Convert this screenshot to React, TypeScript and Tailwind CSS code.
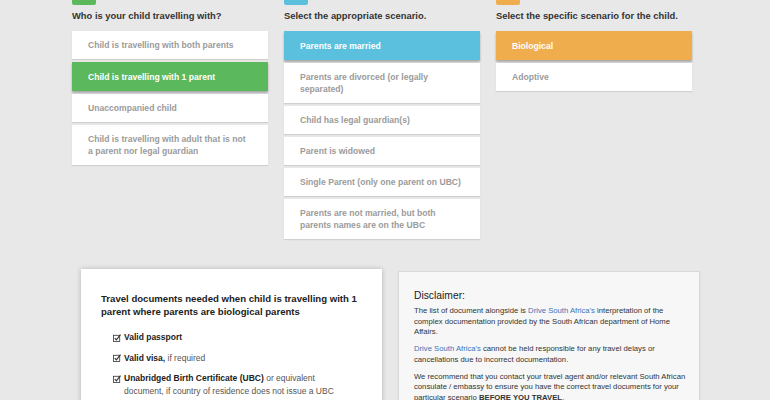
import clsx from "clsx";

type Step = {
  label: string;
  badge: string;
  active: string;
  title: string;
  options: string[];
  selected: number;
};

const STEPS: Step[] = [
  {
    label: "Step 1",
    badge: "bg-[#5cb85c]",
    active: "bg-[#5cb85c]",
    title: "Who is your child travelling with?",
    options: [
      "Child is travelling with both parents",
      "Child is travelling with 1 parent",
      "Unaccompanied child",
      "Child is travelling with adult that is not a parent nor legal guardian",
    ],
    selected: 1,
  },
  {
    label: "Step 2",
    badge: "bg-[#5bc0de]",
    active: "bg-[#5bc0de]",
    title: "Select the appropriate scenario.",
    options: [
      "Parents are married",
      "Parents are divorced (or legally separated)",
      "Child has legal guardian(s)",
      "Parent is widowed",
      "Single Parent (only one parent on UBC)",
      "Parents are not married, but both parents names are on the UBC",
    ],
    selected: 0,
  },
  {
    label: "Step 3",
    badge: "bg-[#f0ad4e]",
    active: "bg-[#f0ad4e]",
    title: "Select the specific scenario for the child.",
    options: ["Biological", "Adoptive"],
    selected: 0,
  },
];

/** 체크 표시 — 상자 + 체크 */
function CheckBox() {
  return (
    <svg viewBox="0 0 10 10" className="mt-[2.5px] h-[8px] w-[8px] shrink-0">
      <rect x="0.6" y="1.6" width="7.8" height="7.8" fill="none" stroke="#333" strokeWidth="1" />
      <path d="M2.2 5.2 L4.2 7.4 L9.4 0.8" fill="none" stroke="#333" strokeWidth="1.4" />
    </svg>
  );
}

function StepColumn({ step }: { step: Step }) {
  return (
    <div className="w-[196px]">
      {/* 단계 라벨 — 화면 위쪽에 잘려 색 띠만 보임 */}
      <div
        aria-label={step.label}
        className={clsx("-mt-[9px] h-[14px] w-[24px] rounded-[2px]", step.badge)}
      />
      <h3 className="mt-[5px] mb-[9px] text-[9.4px] font-bold leading-[12px] text-[#333]">
        {step.title}
      </h3>
      <div className="flex flex-col gap-[3px]">
        {step.options.map((opt, i) => (
          <div
            key={opt}
            className={clsx(
              "px-[16px] text-[8.6px] font-bold leading-[12px]",
              i === step.selected
                ? clsx(step.active, "py-[8.5px] text-white shadow-[0_2px_2px_rgba(0,0,0,0.28)]")
                : "bg-white py-[8px] text-[#9b9b9b] shadow-[0_1px_1px_rgba(0,0,0,0.1)]",
            )}
          >
            {opt}
          </div>
        ))}
      </div>
    </div>
  );
}

export default function App() {
  return (
    <div className="h-[400px] w-full overflow-hidden bg-[#e8e8e8] font-['Liberation_Sans',Arial,sans-serif]">
      <div className="flex items-start gap-[16px] pl-[72px]">
        {STEPS.map((s) => (
          <StepColumn key={s.label} step={s} />
        ))}
      </div>

      <div className="mt-[30px] flex items-start gap-[16px] pl-[81px]">
        <section className="w-[301px] bg-white px-[20px] pt-[23px] pb-[20px] shadow-[0_0_5px_rgba(0,0,0,0.22)]">
          <h2 className="text-[9.6px] font-bold leading-[13px] text-[#222]">
            Travel documents needed when child is travelling with 1 parent where parents are
            biological parents
          </h2>
          <ul className="mt-[13px] flex flex-col gap-[7.5px] pl-[12px] text-[8.5px] leading-[13px] text-[#222]">
            <li className="flex gap-[3px]">
              <CheckBox />
              <div className="w-[225px] font-bold">Valid passport</div>
            </li>
            <li className="flex gap-[3px]">
              <CheckBox />
              <div className="w-[225px]">
                <span className="font-bold">Valid visa,</span>{" "}
                <span className="text-[#555]">if required</span>
              </div>
            </li>
            <li className="flex gap-[3px]">
              <CheckBox />
              <div className="w-[228px] text-[#555]">
                <span className="font-bold text-[#222]">Unabridged Birth Certificate (UBC)</span> or
                equivalent document, if country of residence does not issue a UBC
              </div>
            </li>
          </ul>
        </section>

        <section className="mt-[2px] w-[302px] border border-[#d9d9d9] bg-[#f7f7f7] pt-[18px] pr-[8px] pb-[20px] pl-[15px] shadow-[0_1px_2px_rgba(0,0,0,0.08)]">
          <h2 className="mb-[4px] text-[10.3px] leading-[12px] text-[#1a1a1a]">Disclaimer:</h2>
          <div className="flex flex-col gap-[6.5px] text-[7.7px] leading-[10.5px] text-[#333]">
            <p>
              The list of document alongside is{" "}
              <span className="text-[#3b73b9]">Drive South Africa's</span> interpretation of the
              complex documentation provided by the South African department of Home Affairs.
            </p>
            <p>
              <span className="text-[#3b73b9]">Drive South Africa's</span> cannot be held
              responsible for any travel delays or cancellations due to incorrect documentation.
            </p>
            <p>
              We recommend that you contact your travel agent and/or relevant South African
              consulate / embassy to ensure you have the correct travel documents for your
              particular scenario <span className="font-bold">BEFORE YOU TRAVEL</span>.
            </p>
          </div>
        </section>
      </div>
    </div>
  );
}
